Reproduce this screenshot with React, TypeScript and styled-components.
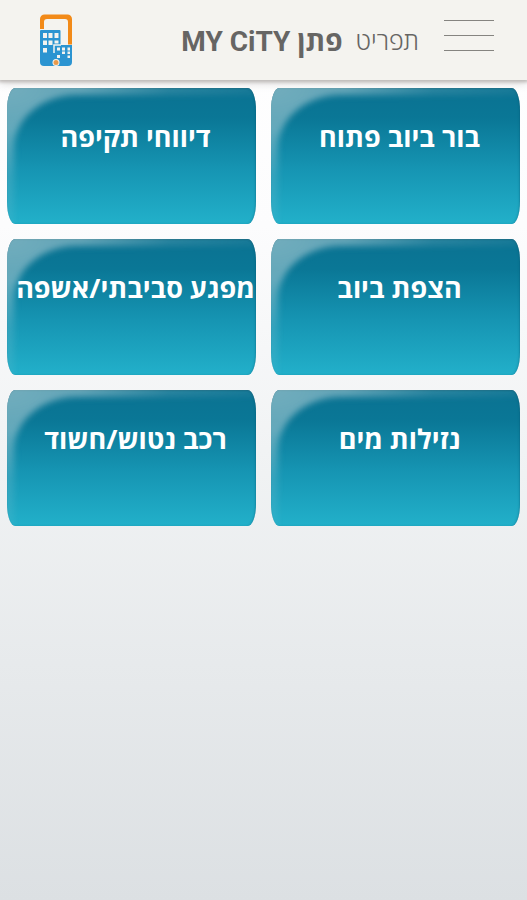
import React from "react";
import styled, { createGlobalStyle } from "styled-components";

const GlobalStyle = createGlobalStyle`
  *, *::before, *::after { box-sizing: border-box; }
  html { height: 100%; }
  body {
    margin: 0;
    min-height: 100%;
    background: linear-gradient(#ffffff 0%, #fcfcfd 25%, #f1f3f4 50%, #dce0e3 100%) no-repeat;
    font-family: "Open Sans", "Noto Sans", sans-serif;
  }
`;

const Page = styled.div`
  display: flex;
  flex-direction: column;
`;

const Header = styled.header`
  display: flex;
  align-items: center;
  height: 80px;
  padding: 0 33px 0 40px;
  background: #f4f3ef;
  color: #666563;
  box-shadow: 0 1px 3px 1px #bfbbb9, 0 3px 8px rgba(120, 115, 112, 0.3);
`;

const MenuButton = styled.button`
  display: flex;
  align-items: center;
  gap: 25px;
  padding: 0;
  border: 0;
  background: none;
  color: inherit;
  font: 300 25px/32px "Open Sans", "Noto Sans", sans-serif;
  cursor: pointer;
`;

const MenuLines = styled.span`
  display: flex;
  flex-direction: column;
  gap: 14px;
  width: 50px;
  margin-bottom: 10px;
`;

const MenuLine = styled.span`
  height: 1px;
  background: #858480;
`;

const Title = styled.h1`
  margin: 0;
  margin-inline: 13px auto;
  padding-top: 4px;
  font: 700 28px/36px Roboto, "Open Sans", sans-serif;
  white-space: nowrap;
`;

const Logo = styled.svg`
  flex: none;
  width: 33px;
  height: 52px;
`;

const Grid = styled.main`
  display: grid;
  grid-template-columns: repeat(2, minmax(0, 1fr));
  gap: 15px;
  padding: 8px 7px;
`;

const Tile = styled.button`
  position: relative;
  display: flex;
  justify-content: center;
  align-items: flex-start;
  height: 136px;
  padding: 31px 0 0 8px;
  border: 0;
  border-radius: 8px / 22px;
  overflow: hidden;
  background: linear-gradient(#0a7292 0%, #0a7796 22%, #1695b3 60%, #22b0ca 100%);
  box-shadow: inset 0 1px 1px rgba(20, 80, 100, 0.35), inset -1px 0 2px rgba(10, 90, 115, 0.3);
  color: #ffffff;
  font: 700 27px/36px "Open Sans", "Noto Sans", sans-serif;
  white-space: nowrap;
  cursor: pointer;
`;

const Gloss = styled.span`
  position: absolute;
  inset: 0;
  mask-image: radial-gradient(ellipse 100% 100% at 0 0, #000 0%, rgba(0, 0, 0, 0.85) 30%, rgba(0, 0, 0, 0.3) 65%, rgba(0, 0, 0, 0.12) 100%);

  &::before {
    content: "";
    position: absolute;
    inset: -40px -70px -70px -40px;
    border: 47px solid rgba(190, 215, 220, 0.58);
    border-top-left-radius: 110px 100px;
    box-shadow: 0 0 0 60px rgba(190, 215, 220, 0.58);
    filter: blur(3px);
  }
`;

const Label = styled.span`
  position: relative;
`;

const reports = [
  "בור ביוב פתוח",
  "דיווחי תקיפה",
  "הצפת ביוב",
  "מפגע סביבתי/אשפה",
  "נזילות מים",
  "רכב נטוש/חשוד",
];

function CityLogo() {
  return (
    <Logo viewBox="0 0 33 52" role="img" aria-label="MY CiTY">
      <path d="M0 15V5a4.500 4.500 0 0 1 4.500-4.500h23A4.500 4.500 0 0 1 32 5v25.500h-4V8q0-3-3-3H7Q4 5 4 8v7Z" fill="#f28a18" />
      <path d="M0 17q0-1 1-1h18.500q1 0 1 1v14H32v17q0 4-4 4H4q-4 0-4-4Z" fill="#2b94d1" />
      <path d="M14 39V31h7" fill="none" stroke="#f4f3ef" strokeWidth="1.500" />
      <g fill="#f4f3ef">
        <path d="M3 19h4v5H3zM8.500 19h4v5h-4zM14.500 19h4v5h-4zM3 26.500h4v4.500H3zM8.500 26.500h4v4.500h-4zM14.500 26.500h4v3h-4zM3 34h4v4.500H3z" />
        <path d="M17 33.500h3v3h-3zM22 33.500h3v3h-3zM27.500 33.500H30v3h-2.500zM22 37.500h3V40h-3zM27.500 37.500H30V40h-2.500zM17 41h3v3h-3zM22 37.500h3v2h-3zM27.500 41.500H30V44h-2.500z" />
        <circle cx="16" cy="48.500" r="3.500" />
      </g>
      <circle cx="16" cy="48.500" r="2.500" fill="#e99a4b" />
    </Logo>
  );
}

export default function App() {
  return (
    <>
      <GlobalStyle />
      <Page dir="rtl" lang="he">
        <Header>
          <MenuButton type="button">
            <MenuLines aria-hidden="true">
              <MenuLine />
              <MenuLine />
              <MenuLine />
            </MenuLines>
            תפריט
          </MenuButton>
          <Title>פתן MY CiTY</Title>
          <CityLogo />
        </Header>
        <Grid>
          {reports.map((name) => (
            <Tile key={name} type="button">
              <Gloss aria-hidden="true" />
              <Label>{name}</Label>
            </Tile>
          ))}
        </Grid>
      </Page>
    </>
  );
}
